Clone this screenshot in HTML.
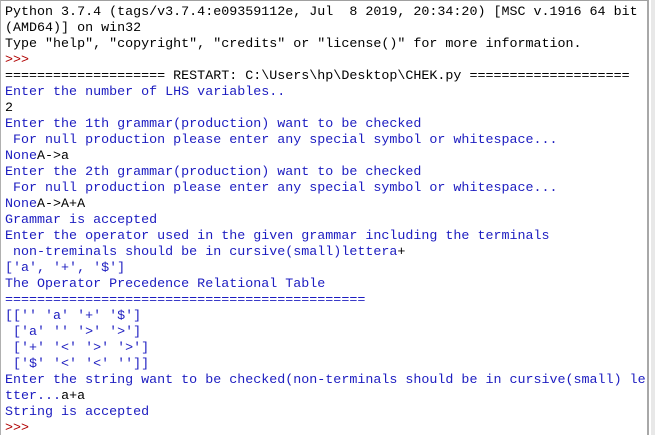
<!DOCTYPE html>
<html><head><meta charset="utf-8"><style>
html,body{margin:0;padding:0;background:#fff;width:655px;height:435px;overflow:hidden}
.wrap{position:absolute;left:0;top:0;width:649px;height:435px;border-top:1px solid #a0a0a0;border-left:1px solid #b0b0b0;border-right:2px solid #a8a8a8;box-sizing:border-box;background:#fff}
.side{position:absolute;left:651px;top:0;width:4px;height:435px;background:#e8e8e8}
pre{margin:0;position:absolute;left:5px;top:5px;font-family:"Liberation Mono",monospace;font-size:13.35px;line-height:16px;color:#000;white-space:pre}
.b{color:#1c1cc0}.r{color:#b00000}
</style></head><body>
<div class="wrap"></div><div class="side"></div>
<pre>Python 3.7.4 (tags/v3.7.4:e09359112e, Jul  8 2019, 20:34:20) [MSC v.1916 64 bit
(AMD64)] on win32
Type "help", "copyright", "credits" or "license()" for more information.
<span class="r">&gt;&gt;&gt;</span>
==================== RESTART: C:\Users\hp\Desktop\CHEK.py ====================
<span class="b">Enter the number of LHS variables..</span>
2
<span class="b">Enter the 1th grammar(production) want to be checked
 For null production please enter any special symbol or whitespace...
None</span>A-&gt;a
<span class="b">Enter the 2th grammar(production) want to be checked
 For null production please enter any special symbol or whitespace...
None</span>A-&gt;A+A
<span class="b">Grammar is accepted
Enter the operator used in the given grammar including the terminals
 non-treminals should be in cursive(small)lettera</span>+
<span class="b">['a', '+', '$']
The Operator Precedence Relational Table
=============================================
[['' 'a' '+' '$']
 ['a' '' '&gt;' '&gt;']
 ['+' '&lt;' '&gt;' '&gt;']
 ['$' '&lt;' '&lt;' '']]
Enter the string want to be checked(non-terminals should be in cursive(small) le
tter...</span>a+a
<span class="b">String is accepted</span>
<span class="r">&gt;&gt;&gt;</span></pre>
</body></html>
